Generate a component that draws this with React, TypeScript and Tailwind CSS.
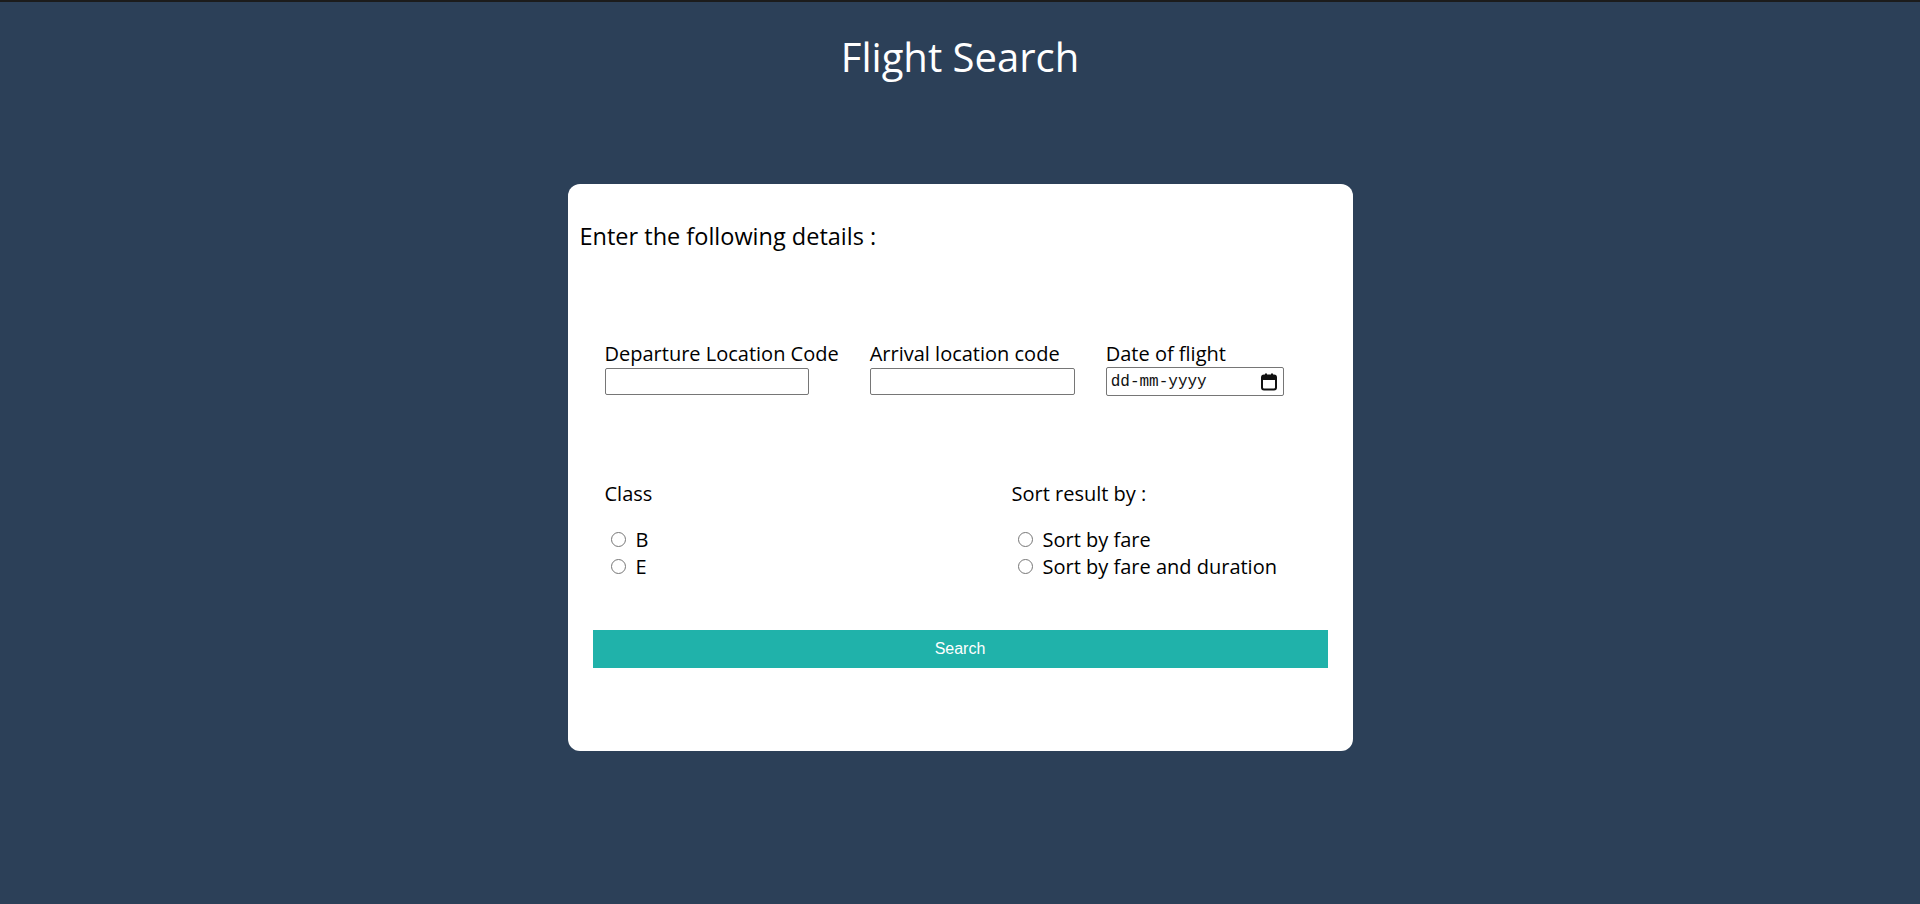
import { useState } from "react";

function CalendarIcon() {
  return (
    <svg width="16" height="18" viewBox="0 0 16 18" fill="none">
      <rect x="1" y="2.5" width="14" height="14" rx="2" stroke="#111" strokeWidth="2" />
      <rect x="1" y="2.5" width="14" height="4.5" rx="1.5" fill="#111" />
      <rect x="4" y="0.5" width="2" height="3" fill="#111" />
      <rect x="10" y="0.5" width="2" height="3" fill="#111" />
    </svg>
  );
}

export default function App() {
  const [cls, setCls] = useState("");
  const [sort, setSort] = useState("");

  return (
    <div className="min-h-screen bg-[#2c4058] border-t-2 border-[#1c1c1c] font-['Open_Sans',sans-serif]">
      <h1 className="text-center text-white text-[40px] leading-[54px] pt-[28px]">Flight Search</h1>

      <div className="mx-auto mt-[100px] w-[785px] h-[567px] bg-white rounded-[12px] text-black">
        <p className="pl-[12px] pt-[36px] text-[23.5px] leading-[32px]">Enter the following details :</p>

        {/* location + date row */}
        <div className="flex gap-[31px] pl-[37px] mt-[89px] text-[20px]">
          <div className="flex flex-col">
            <label className="leading-[25px] pb-[2px]">Departure Location Code</label>
            <input type="text" className="w-[204px] h-[27px] border border-[#767676] rounded-[2px] px-1 text-[16px] outline-none" />
          </div>
          <div className="flex flex-col">
            <label className="leading-[25px] pb-[2px]">Arrival location code</label>
            <input type="text" className="w-[205px] h-[27px] border border-[#767676] rounded-[2px] px-1 text-[16px] outline-none" />
          </div>
          <div className="flex flex-col">
            <label className="leading-[25px] pb-[2px]">Date of flight</label>
            <div className="-mt-[1px] w-[178px] h-[29px] border border-[#767676] rounded-[2px] flex items-center justify-between pl-[4px] pr-[6px]">
              <span className="font-['Liberation_Mono',monospace] text-[16px] leading-none text-[#111]">dd-mm-yyyy</span>
              <CalendarIcon />
            </div>
          </div>
        </div>

        {/* class + sort */}
        <div className="flex pl-[37px] mt-[84px] text-[20px]">
          <div className="w-[407px]">
            <div className="leading-[27px]">Class</div>
            <div className="mt-[19px] flex flex-col">
              {["B", "E"].map(v => (
                <label key={v} className="flex items-center h-[27px] leading-[27px]">
                  <input type="radio" name="class" checked={cls === v} onChange={() => setCls(v)} className="w-[15px] h-[15px] ml-[6px] mr-[10px] m-0" />
                  {v}
                </label>
              ))}
            </div>
          </div>
          <div>
            <div className="leading-[27px]">Sort result by :</div>
            <div className="mt-[19px] flex flex-col">
              {["Sort by fare", "Sort by fare and duration"].map(v => (
                <label key={v} className="flex items-center h-[27px] leading-[27px]">
                  <input type="radio" name="sort" checked={sort === v} onChange={() => setSort(v)} className="w-[15px] h-[15px] ml-[6px] mr-[10px] m-0" />
                  {v}
                </label>
              ))}
            </div>
          </div>
        </div>

        <div className="px-[25px] mt-[50px]">
          <button className="w-full h-[38px] bg-[#20b2aa] text-white font-['Liberation_Sans',Arial,sans-serif] text-[16px]">
            Search
          </button>
        </div>
      </div>
    </div>
  );
}
